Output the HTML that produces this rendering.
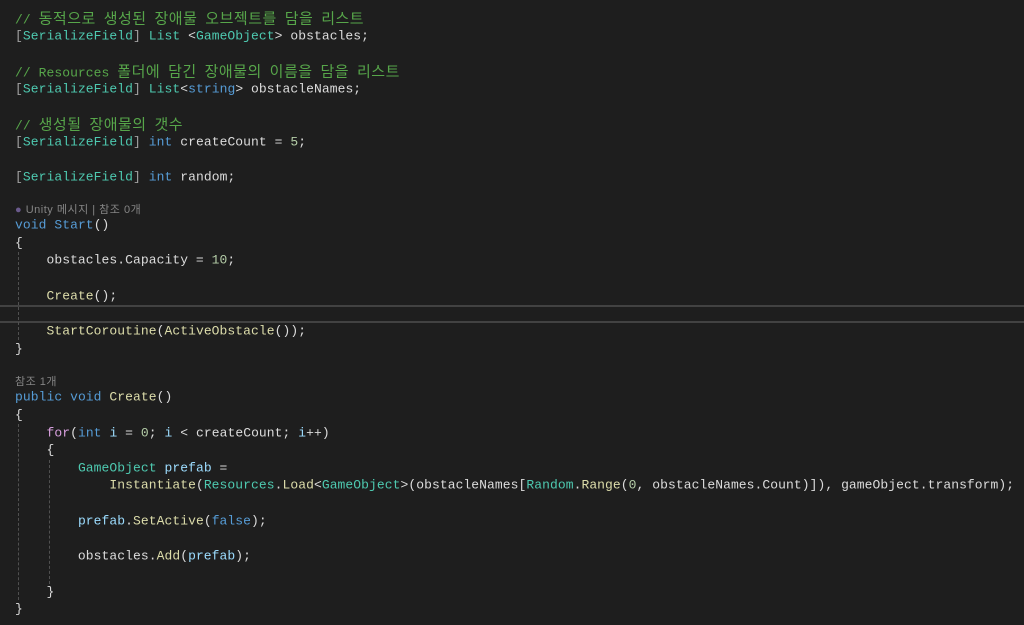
<!DOCTYPE html>
<html lang="ko">
<head>
<meta charset="utf-8">
<title>Code</title>
<style>
html,body{margin:0;padding:0;width:1024px;height:625px;overflow:hidden;background:#1e1e1e;}
#v{position:relative;width:1024px;height:625px;overflow:hidden;background:#1e1e1e;}
.l{position:absolute;left:15px;height:18px;line-height:18px;white-space:pre;font-family:"Liberation Mono","Noto Sans CJK KR",monospace;font-size:13px;letter-spacing:.065px;color:#dcdcdc;filter:blur(.35px);transform:translateY(.5px);}
.k{font-family:"Noto Sans CJK KR","Liberation Mono",sans-serif;font-size:15px;letter-spacing:.5px;word-spacing:3.2px;}
.c{color:#57a64a}
.t{color:#4ec9b0}
.b{color:#569cd6}
.m{color:#dcdcaa}
.p{color:#9cdcfe}
.n{color:#b5cea8}
.f{color:#d8a0df}
.s{color:#a0a0a0}
.lens{position:absolute;left:15px;height:14px;line-height:14px;white-space:pre;font-family:"Liberation Sans","Noto Sans CJK KR",sans-serif;font-size:11px;letter-spacing:.5px;color:#858585;filter:blur(.35px);}
.hl{position:absolute;left:0;width:1024px;height:2px;background:#424242;}
.g{position:absolute;width:0;border-left:1px dashed #505050;}
</style>
</head>
<body>
<div id="v">
<div class="hl" style="top:305px"></div>
<div class="hl" style="top:321px"></div>
<div class="g" style="left:18px;top:252px;height:88px"></div>
<div class="g" style="left:18px;top:424px;height:176px"></div>
<div class="g" style="left:49px;top:460px;height:124px"></div>

<div class="l c" style="top:9px">// <span class="k">동적으로 생성된 장애물 오브젝트를 담을 리스트</span></div>
<div class="l" style="top:27px"><span class="s">[</span><span class="t">SerializeField</span><span class="s">]</span> <span class="t">List</span> &lt;<span class="t">GameObject</span>&gt; obstacles;</div>
<div class="l c" style="top:62px">// Resources <span class="k">폴더에 담긴 장애물의 이름을 담을 리스트</span></div>
<div class="l" style="top:80px"><span class="s">[</span><span class="t">SerializeField</span><span class="s">]</span> <span class="t">List</span>&lt;<span class="b">string</span>&gt; obstacleNames;</div>
<div class="l c" style="top:115px">// <span class="k">생성될 장애물의 갯수</span></div>
<div class="l" style="top:133px"><span class="s">[</span><span class="t">SerializeField</span><span class="s">]</span> <span class="b">int</span> createCount = <span class="n">5</span>;</div>
<div class="l" style="top:168px"><span class="s">[</span><span class="t">SerializeField</span><span class="s">]</span> <span class="b">int</span> random;</div>

<div class="lens" style="top:203px"><span style="color:#6a5a8c">●</span> Unity 메시지 | 참조 0개</div>
<div class="l" style="top:216px"><span class="b">void</span> <span class="b">Start</span>()</div>
<div class="l" style="top:234px">{</div>
<div class="l" style="top:251px">    obstacles.Capacity = <span class="n">10</span>;</div>
<div class="l" style="top:287px">    <span class="m">Create</span>();</div>
<div class="l" style="top:322px">    <span class="m">StartCoroutine</span>(<span class="m">ActiveObstacle</span>());</div>
<div class="l" style="top:340px">}</div>

<div class="lens" style="top:375px">참조 1개</div>
<div class="l" style="top:388px"><span class="b">public</span> <span class="b">void</span> <span class="m">Create</span>()</div>
<div class="l" style="top:406px">{</div>
<div class="l" style="top:424px">    <span class="f">for</span>(<span class="b">int</span> <span class="p">i</span> = <span class="n">0</span>; <span class="p">i</span> &lt; createCount; <span class="p">i</span>++)</div>
<div class="l" style="top:441px">    {</div>
<div class="l" style="top:459px">        <span class="t">GameObject</span> <span class="p">prefab</span> =</div>
<div class="l" style="top:476px">            <span class="m">Instantiate</span>(<span class="t">Resources</span>.<span class="m">Load</span>&lt;<span class="t">GameObject</span>&gt;(obstacleNames[<span class="t">Random</span>.<span class="m">Range</span>(<span class="n">0</span>, obstacleNames.Count)]), gameObject.transform);</div>
<div class="l" style="top:512px">        <span class="p">prefab</span>.<span class="m">SetActive</span>(<span class="b">false</span>);</div>
<div class="l" style="top:547px">        obstacles.<span class="m">Add</span>(<span class="p">prefab</span>);</div>
<div class="l" style="top:583px">    }</div>
<div class="l" style="top:600px">}</div>
</div>
</body>
</html>
